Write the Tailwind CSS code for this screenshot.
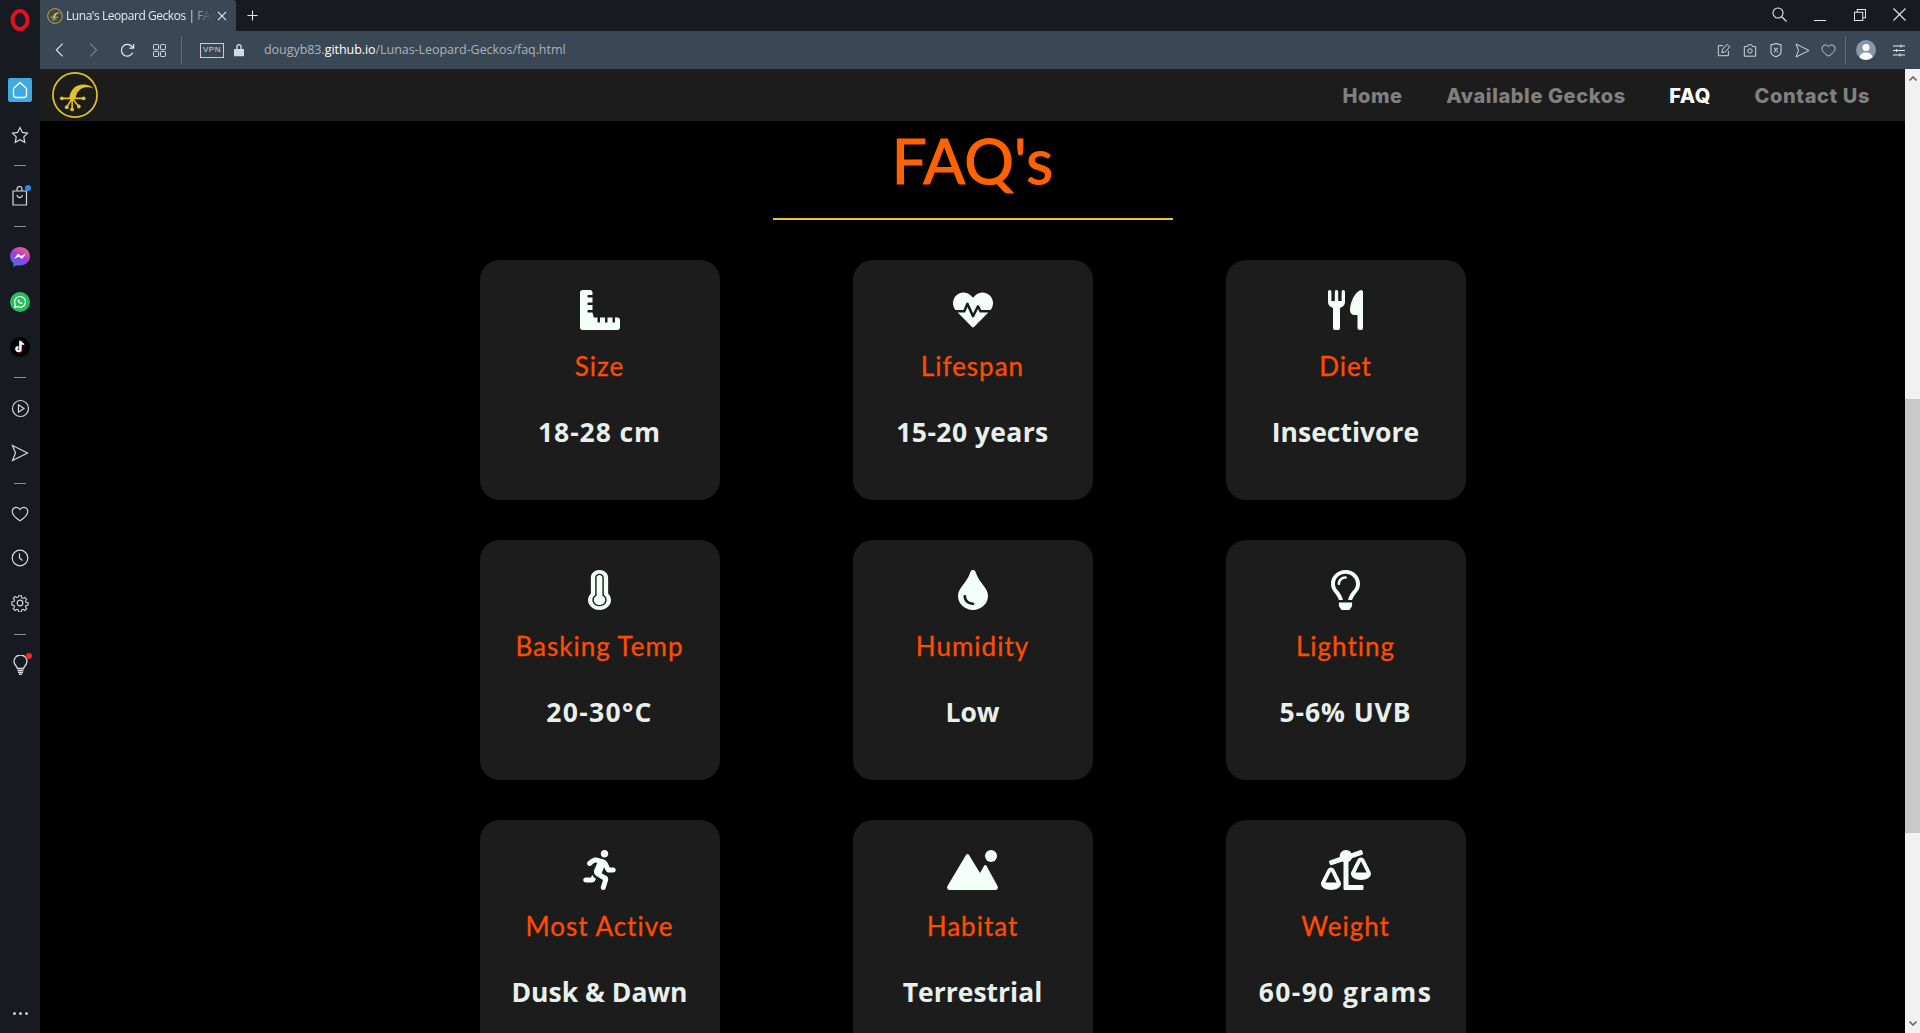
<!DOCTYPE html>
<html lang="en">
<head>
<meta charset="utf-8">
<title>Luna's Leopard Geckos | FAQ</title>
<script src="https://cdn.jsdelivr.net/npm/@tailwindcss/browser@4"></script>
</head>
<body class="bg-black">
<div class="flex h-[1033px] w-[1920px] overflow-hidden font-['Open_Sans',sans-serif]">

  <!-- Opera sidebar -->
  <aside class="flex h-full w-[40px] shrink-0 flex-col items-center bg-[#171b21] text-[#d5d9dd]">
    <div class="flex h-[40px] items-center justify-center">
      <svg class="h-[22px] w-[20px]" viewBox="0 0 20 22"><ellipse cx="10" cy="11" rx="7.5" ry="9" fill="none" stroke="#e0121d" stroke-width="4"/></svg>
    </div>
    <div class="mt-[38px] flex h-[24px] w-[24px] items-center justify-center rounded-[2px] bg-[#3fa9e0]">
      <svg class="h-[18px] w-[18px]" viewBox="0 0 18 18" fill="none" stroke="#fff" stroke-width="1.3"><path d="M2.5 7.5 9 1.5l6.500 6v6.500a2.500 2.500 0 0 1-2.500 2.500H5a2.500 2.500 0 0 1-2.500-2.500z"/></svg>
    </div>
    <svg class="mt-[24px] h-[18px] w-[18px]" viewBox="0 0 18 18" fill="none" stroke="currentColor" stroke-width="1.200"><path d="M9 1.500l2.400 4.900 5.100.8-3.700 3.700.9 5.400L9 13.800l-4.700 2.500.9-5.400L1.500 7.200l5.100-.8z"/></svg>
    <div class="mt-[21px] h-px w-[12px] bg-[#8a8f95]"></div>
    <div class="relative mt-[20px] h-[20px] w-[16px]">
      <svg class="h-[20px] w-[16px]" viewBox="0 0 16 20" fill="none" stroke="currentColor" stroke-width="1.200"><path d="M1 5h13.500v14H1zM5 5V3a2.500 2.500 0 0 1 5 0v2M5 9c.5 3.500 5 3.500 5.500 0"/></svg>
      <span class="absolute right-[-3px] top-[-1px] h-[6px] w-[6px] rounded-full bg-[#1e8ff0]"></span>
    </div>
    <div class="mt-[20px] h-px w-[12px] bg-[#8a8f95]"></div>
    <svg class="mt-[20px] h-[20px] w-[20px]" viewBox="0 0 20 20">
      <defs><linearGradient id="msg" x1="0.2" y1="1" x2="0.8" y2="0"><stop offset="0" stop-color="#2f7bf6"/><stop offset="0.5" stop-color="#a33bdc"/><stop offset="1" stop-color="#f8617d"/></linearGradient></defs>
      <path d="M10 0C4.500 0 0 4.100 0 9.300c0 2.800 1.300 5.200 3.400 6.900V20l3.400-1.800c1 .3 2.100.4 3.200.4 5.500 0 10-4.100 10-9.300S15.500 0 10 0z" fill="url(#msg)"/>
      <path d="M4 12l4-5.500 3 2.500 5-2.500-4 5.500-3-2.500z" fill="#fff"/>
    </svg>
    <svg class="mt-[25px] h-[20px] w-[20px]" viewBox="0 0 20 20">
      <circle cx="10" cy="10" r="10" fill="#25c05c"/>
      <path d="M10 4.500a5.400 5.400 0 0 0-4.600 8.200l-.7 2.600 2.700-.7A5.400 5.400 0 1 0 10 4.500z" fill="none" stroke="#fff" stroke-width="1.200"/>
      <path d="M8 7.500c-.7.700-.4 2 .8 3.300s2.500 1.600 3.300 1l.4-.9-1.200-.7-.6.500c-.7-.3-1.200-.9-1.500-1.500l.5-.6-.7-1.200z" fill="#fff"/>
    </svg>
    <svg class="mt-[25px] h-[20px] w-[20px]" viewBox="0 0 20 20">
      <circle cx="10" cy="10" r="10" fill="#000"/>
      <path d="M10.500 4v8.200a2 2 0 1 1-2-2M10.500 4c.2 1.900 1.300 3 3.200 3.200" fill="none" stroke="#ff2d55" stroke-width="1.800" transform="translate(.8 .5)"/>
      <path d="M10.500 4v8.200a2 2 0 1 1-2-2M10.500 4c.2 1.900 1.300 3 3.200 3.200" fill="none" stroke="#25f4ee" stroke-width="1.800" transform="translate(-.6 -.3)"/>
      <path d="M10.500 4v8.200a2 2 0 1 1-2-2M10.500 4c.2 1.900 1.300 3 3.200 3.200" fill="none" stroke="#fff" stroke-width="1.800"/>
    </svg>
    <div class="mt-[20px] h-px w-[12px] bg-[#8a8f95]"></div>
    <svg class="mt-[21px] h-[19px] w-[19px]" viewBox="0 0 19 19" fill="none" stroke="currentColor" stroke-width="1.200"><circle cx="9.500" cy="9.500" r="8"/><path d="M7.500 5.800l5.500 3.700-5.500 3.700z"/></svg>
    <svg class="mt-[26px] h-[18px] w-[18px]" viewBox="0 0 18 18" fill="none" stroke="currentColor" stroke-width="1.200"><path d="M1.500 1.500 16.500 9 1.500 16.500 4.500 9z"/></svg>
    <div class="mt-[21px] h-px w-[12px] bg-[#8a8f95]"></div>
    <svg class="mt-[21px] h-[18px] w-[18px]" viewBox="0 0 18 18" fill="none" stroke="currentColor" stroke-width="1.200"><path d="M9 15.800C4 12.500 1.200 10 1.200 6.500 1.200 4 3.200 2.300 5.200 2.300c1.600 0 3 .8 3.800 2.200.8-1.400 2.200-2.200 3.800-2.200 2 0 4 1.700 4 4.200 0 3.500-2.800 6-7.800 9.300z"/></svg>
    <svg class="mt-[26px] h-[18px] w-[18px]" viewBox="0 0 18 18" fill="none" stroke="currentColor" stroke-width="1.200"><circle cx="9" cy="9" r="7.800"/><path d="M8.500 4.500V9l3 2.500"/></svg>
    <svg class="mt-[27px] h-[18px] w-[18px]" viewBox="0 0 18 18" fill="none" stroke="currentColor" stroke-width="1.200"><circle cx="9" cy="9" r="2.800"/><path d="M7.500 1h3l.4 2.300 1.500.7 2-1.300 2 2.100-1.300 2 .6 1.500 2.300.4v2.600l-2.300.4-.6 1.500 1.300 2-2 2.100-2-1.300-1.500.7-.4 2.300h-3l-.4-2.300-1.500-.7-2 1.300-2-2.100 1.300-2-.6-1.500-2.300-.4V7.700l2.300-.4.6-1.500-1.300-2 2-2.100 2 1.300 1.500-.7z" transform="translate(.9 .9) scale(.9)"/></svg>
    <div class="mt-[22px] h-px w-[12px] bg-[#8a8f95]"></div>
    <div class="relative mt-[20px] h-[20px] w-[15px]">
      <svg class="h-[20px] w-[15px]" viewBox="0 0 15 20" fill="none" stroke="currentColor" stroke-width="1.300"><path d="M4.500 13.500C4 11 1 9.800 1 6.500a6.500 6.500 0 0 1 13 0c0 3.300-3 4.500-3.500 7zM4.500 15.500h6M5 17.500h5M6 19.300h3"/></svg>
      <span class="absolute right-[-4px] top-[-2px] h-[6px] w-[6px] rounded-full bg-[#f02a2a]"></span>
    </div>
    <div class="mt-auto mb-[18px] flex gap-[3px]">
      <span class="h-[3px] w-[3px] rounded-full bg-[#c9ccd0]"></span>
      <span class="h-[3px] w-[3px] rounded-full bg-[#c9ccd0]"></span>
      <span class="h-[3px] w-[3px] rounded-full bg-[#c9ccd0]"></span>
    </div>
  </aside>

  <div class="flex min-w-0 flex-1 flex-col">
    <!-- Tab strip -->
    <div class="flex h-[31px] shrink-0 items-center bg-[#171b21] text-[#e6e9ec]">
      <div class="flex h-full w-[196px] items-center rounded-tr-[3px] bg-[#3a4754] pl-[7px]">
        <svg class="h-[16px] w-[16px] shrink-0" viewBox="0 0 48 48" fill="none" stroke="#e0c324">
          <circle cx="24" cy="24" r="22" stroke-width="2.500"/>
          <path d="M18 28c.5-7 4-13 11-14.500 5-1 11 0 14.500 4-4-2-9-2-12-.5-4 2-6 5-7 11z" fill="#e0c324" stroke="none"/>
          <path d="M10 27.500h23M21 27.500l-5 9M21 27.500V39M21 27.500l7 8.500" stroke-width="2.500"/>
        </svg>
        <span class="ml-[3px] w-[145px] whitespace-nowrap font-['Open_Sans'] text-[12px] tracking-[-0.45px] [mask-image:linear-gradient(to_right,#000_85%,transparent)]">Luna's Leopard Geckos | FA</span>
        <svg class="ml-[6px] h-[10px] w-[10px]" viewBox="0 0 11 11" stroke="currentColor" stroke-width="1.200"><path d="M1 1l9 9M10 1l-9 9"/></svg>
      </div>
      <svg class="ml-[11px] h-[11px] w-[11px]" viewBox="0 0 12 12" stroke="currentColor" stroke-width="1.200"><path d="M6 .5v11M.5 6h11"/></svg>
      <svg class="ml-auto mb-[3px] h-[15px] w-[15px]" viewBox="0 0 15 15" fill="none" stroke="currentColor" stroke-width="1.100"><circle cx="6" cy="6" r="5"/><path d="M9.500 9.500l5 5"/></svg>
      <div class="ml-[27px] mt-[9px] h-px w-[12px] bg-[#e6e9ec]"></div>
      <svg class="ml-[28px] mb-[2px] h-[12px] w-[12px]" viewBox="0 0 13 13" fill="none" stroke="currentColor" stroke-width="1.100"><path d="M.5 3.500h9v9h-9zM3.500 3.500v-3h9v9h-3"/></svg>
      <svg class="ml-[27px] mr-[14px] mb-[2px] h-[13px] w-[13px]" viewBox="0 0 13 13" stroke="currentColor" stroke-width="1.100"><path d="M.5.500l12 12M12.500.500l-12 12"/></svg>
    </div>

    <!-- Toolbar -->
    <div class="flex h-[38px] shrink-0 items-center bg-[#3a4754] text-[#d5d9dd]">
      <svg class="ml-[15px] h-[16px] w-[9px]" viewBox="0 0 10 16" fill="none" stroke="#e6e9ec" stroke-width="1.200"><path d="M8.500 1 1.500 8l7 7"/></svg>
      <svg class="ml-[25px] h-[16px] w-[9px]" viewBox="0 0 10 16" fill="none" stroke="#7a8490" stroke-width="1.200"><path d="M1.500 1l7 7-7 7"/></svg>
      <svg class="ml-[22px] h-[15px] w-[15px]" viewBox="0 0 16 16" fill="none" stroke="#e6e9ec" stroke-width="1.300"><path d="M13.500 10.500A6.300 6.300 0 1 1 12.500 3.500L14.500 5.500M14.500 1v4.500H10"/></svg>
      <svg class="ml-[18px] h-[13px] w-[13px]" viewBox="0 0 14 14" fill="none" stroke="#e6e9ec" stroke-width="1"><rect x=".5" y=".5" width="5.500" height="5.500" rx="1"/><rect x="8" y=".5" width="5.500" height="5.500" rx="1"/><rect x=".5" y="8" width="5.500" height="5.500" rx="1"/><rect x="8" y="8" width="5.500" height="5.500" rx="1"/></svg>
      <div class="ml-[15px] h-[28px] w-px bg-[#5d6975]"></div>
      <div class="ml-[18px] flex h-[15px] w-[24px] items-center justify-center border border-[#c8cdd2] font-['Liberation_Sans'] text-[8px] leading-none tracking-[0.6px] text-[#d5d9dd]">VPN</div>
      <svg class="ml-[10px] h-[14px] w-[10px]" viewBox="0 0 11 14" fill="#d5d9dd"><path d="M0 6h11v8H0zM2.500 6V3.500a3 3 0 0 1 6 0V6H7V3.500a1.500 1.500 0 0 0-3 0V6z"/></svg>
      <div class="ml-[20px] whitespace-nowrap font-['Open_Sans'] text-[12.500px] tracking-[-0.05px] text-[#aab3bb]">dougyb83.<span class="text-white">github.io</span>/Lunas-Leopard-Geckos/faq.html</div>
      <div class="ml-auto flex items-center">
        <svg class="h-[14px] w-[14px]" viewBox="0 0 16 16" fill="none" stroke="currentColor" stroke-width="1.100"><path d="M7 3H1.500v11.500H13V9M5.500 11l1-4 5-5.500 3 3-5 5.500z"/></svg>
        <svg class="ml-[12px] h-[15px] w-[14px]" viewBox="0 0 16 16" fill="none" stroke="currentColor" stroke-width="1.100"><path d="M1.500 3.500h3.500l1-2h4l1 2h3.500v11h-13z"/><circle cx="8" cy="8.500" r="2.500"/></svg>
        <svg class="ml-[13px] h-[16px] w-[12px]" viewBox="0 0 13 16" fill="none" stroke="currentColor" stroke-width="1.100"><path d="M6.500 1 12 2.500v7c0 3-3 5-5.500 5.800C4 14.500 1 12.500 1 9.500v-7zM4.500 5.500l4 5M8.500 5.500l-4 5"/></svg>
        <svg class="ml-[13px] h-[15px] w-[15px]" viewBox="0 0 15 15" fill="none" stroke="currentColor" stroke-width="1"><path d="M1 1l13 6.500L1 14l2.500-6.500z"/></svg>
        <svg class="ml-[11px] h-[15px] w-[15px]" viewBox="0 0 18 18" fill="none" stroke="currentColor" stroke-width="1.100"><path d="M9 15.800C4 12.500 1.200 10 1.200 6.500 1.200 4 3.200 2.300 5.200 2.300c1.600 0 3 .8 3.800 2.200.8-1.400 2.200-2.200 3.800-2.200 2 0 4 1.700 4 4.200 0 3.500-2.800 6-7.800 9.300z"/></svg>
        <div class="ml-[9px] h-[28px] w-px bg-[#5d6975]"></div>
        <svg class="ml-[10px] h-[20px] w-[20px]" viewBox="0 0 20 20"><circle cx="10" cy="10" r="10" fill="#8a97a5"/><circle cx="10" cy="7.500" r="3.500" fill="#fff"/><path d="M3.500 17.500c.5-3.500 3-5 6.500-5s6 1.500 6.500 5a10 10 0 0 1-13 0z" fill="#fff"/></svg>
        <svg class="ml-[17px] mr-[15px] h-[13px] w-[12px]" viewBox="0 0 12 13" stroke="#e6e9ec" stroke-width="1" fill="none"><path d="M0 2h12M0 6.500h12M0 11h12M8 .5v3M3.500 5v3M7 9.500v3"/></svg>
      </div>
    </div>

    <div class="flex min-h-0 flex-1">
      <main class="flex min-w-0 flex-1 flex-col overflow-hidden bg-black">
        <nav class="flex h-[52px] shrink-0 items-center justify-between bg-[#1c1c1c] pl-[12px] pr-[35px]">
          <svg class="h-[46px] w-[46px]" viewBox="0 0 48 48" fill="none" stroke="#e0c324">
            <circle cx="24" cy="24" r="23" stroke-width="1.800"/>
            <path d="M18 28c.5-7 4-13 11-14.500 5-1 11 0 14.500 4-4-2-9-2-12-.5-4 2-6 5-7 11z" fill="#e0c324" stroke="none"/>
            <path d="M10.300 27.500H33M21 27.500l-5.600 9.200M21 27.500V39M21 27.500l7 8.500" stroke-width="1.700"/>
            <circle cx="10.300" cy="27.500" r="2" fill="#e0c324" stroke="none"/>
            <circle cx="33" cy="27.500" r="2" fill="#e0c324" stroke="none"/>
            <circle cx="15.400" cy="36.700" r="2" fill="#e0c324" stroke="none"/>
            <circle cx="21" cy="39" r="2" fill="#e0c324" stroke="none"/>
            <circle cx="28" cy="36" r="2" fill="#e0c324" stroke="none"/>
          </svg>
          <ul class="flex items-center gap-[43.5px] pt-[2px] font-['Inter'] text-[20px] font-extrabold tracking-[0.6px] text-[#808080]">
            <li>Home</li>
            <li>Available Geckos</li>
            <li class="text-white">FAQ</li>
            <li>Contact Us</li>
          </ul>
        </nav>

        <section class="flex flex-col items-center">
          <h1 class="font-['Lato'] text-[62px] leading-[78px] tracking-[0.1px] text-[#ff6200] [-webkit-text-stroke:1.2px_#ff6200]">FAQ's</h1>
          <div class="mt-[19px] h-[2px] w-[400px] bg-[#e6c92a]"></div>

          <div class="mt-[40px] grid grid-cols-[240px_240px_240px] gap-x-[133px] gap-y-[40px]">
            <article class="flex h-[240px] flex-col items-center rounded-[20px] bg-[#1c1c1c] pt-[30px]">
              <svg class="h-[40px] w-[40px]" viewBox="0 0 512 512" fill="#f5fffa"><path d="M160 288h-56c-4.420 0-8-3.580-8-8v-16c0-4.420 3.580-8 8-8h56v-64h-56c-4.420 0-8-3.580-8-8v-16c0-4.420 3.580-8 8-8h56V96h-56c-4.420 0-8-3.580-8-8V72c0-4.420 3.580-8 8-8h56V32c0-17.670-14.330-32-32-32H32C14.330 0 0 14.330 0 32v448c0 17.670 14.330 32 32 32h448c17.670 0 32-14.330 32-32v-96c0-17.670-14.330-32-32-32h-32v56c0 4.420-3.580 8-8 8h-16c-4.420 0-8-3.580-8-8v-56h-64v56c0 4.420-3.580 8-8 8h-16c-4.420 0-8-3.580-8-8v-56h-64v56c0 4.420-3.580 8-8 8h-16c-4.420 0-8-3.580-8-8v-56h-48z"/></svg>
              <h2 class="mt-[18px] font-['Lato'] text-[26px] leading-[36px] tracking-[1px] text-[#ff4d00] [-webkit-text-stroke:0.3px_#ff4d00]">Size</h2>
              <p class="mt-[30px] font-['Open_Sans'] text-[26.500px] font-bold leading-[36px] tracking-[0.9px] text-[#e8f0ec]">18-28 cm</p>
            </article>
            <article class="flex h-[240px] flex-col items-center rounded-[20px] bg-[#1c1c1c] pt-[30px]">
              <svg class="h-[40px] w-[40px]" viewBox="0 0 512 512" fill="#f5fffa"><path d="M320.200 243.800l-49.700 99.400c-6 12.100-23.400 11.700-28.900-.6l-56.900-126.300-30 71.700H60.600l182.500 186.500c7.100 7.300 18.600 7.300 25.700 0L451.400 288H342.300l-22.100-44.200zM473.700 73.900l-2.400-2.500c-51.500-52.600-135.800-52.600-187.400 0L256 100l-27.900-28.500c-51.500-52.700-135.900-52.700-187.400 0l-2.400 2.400C-10.400 123.700-12.500 203 31 256h102.400l35.900-86.200c5.400-12.900 23.600-13.200 29.400-.4l58.200 129.300 49-97.900c5.900-11.800 22.700-11.800 28.600 0l27.600 55.200H481c43.500-53 41.400-132.300-7.300-182.100z"/></svg>
              <h2 class="mt-[18px] font-['Lato'] text-[26px] leading-[36px] tracking-[1px] text-[#ff4d00] [-webkit-text-stroke:0.3px_#ff4d00]">Lifespan</h2>
              <p class="mt-[30px] font-['Open_Sans'] text-[26.500px] font-bold leading-[36px] tracking-[0.4px] text-[#e8f0ec]">15-20 years</p>
            </article>
            <article class="flex h-[240px] flex-col items-center rounded-[20px] bg-[#1c1c1c] pt-[30px]">
              <svg class="h-[40px] w-[35px]" viewBox="0 0 35 40" fill="#f5fffa"><path d="M0 1.700a1.700 1.700 0 0 1 3.400 0V11h3.400V1.700a1.700 1.700 0 0 1 3.400 0V11h3.400V1.700a1.700 1.700 0 0 1 3.400 0V12c0 3-2 5-5 6v20a2 2 0 0 1-2 2H7a2 2 0 0 1-2-2V18c-3-1-5-3-5-6z"/><path d="M35 2v36a2 2 0 0 1-2 2h-1a2.500 2.500 0 0 1-2.500-2.500V25h-3c-2.500 0-4.500-2-4.500-4.500C22 12 27 2 33 0c1 0 2 .8 2 2z"/></svg>
              <h2 class="mt-[18px] font-['Lato'] text-[26px] leading-[36px] tracking-[1px] text-[#ff4d00] [-webkit-text-stroke:0.3px_#ff4d00]">Diet</h2>
              <p class="mt-[30px] font-['Open_Sans'] text-[26.500px] font-bold leading-[36px] text-[#e8f0ec]">Insectivore</p>
            </article>

            <article class="flex h-[240px] flex-col items-center rounded-[20px] bg-[#1c1c1c] pt-[30px]">
              <svg class="h-[40px] w-[23px]" viewBox="0 0 256 512" preserveAspectRatio="none" fill="#f5fffa"><path d="M224 96c0-53.019-42.981-96-96-96S32 42.981 32 96v203.347C12.225 321.756.166 351.136.002 383.333c-.359 70.303 56.787 128.176 127.089 128.664.299.002.61.003.909.003 70.698 0 128-57.304 128-128 0-32.459-12.088-62.090-32-84.653V96zm-96 368l-.576-.002c-43.860-.304-79.647-36.544-79.423-80.420.173-33.980 19.266-51.652 31.999-66.080V96c0-26.467 21.533-48 48-48s48 21.533 48 48v221.498c12.630 14.312 32 32.164 32 66.502 0 44.112-35.888 80-80 80zm64-80c0 35.346-28.654 64-64 64s-64-28.654-64-64c0-23.685 12.876-44.349 32-55.417V96c0-17.673 14.327-32 32-32s32 14.327 32 32v232.583c19.124 11.068 32 31.732 32 55.417z"/></svg>
              <h2 class="mt-[18px] font-['Lato'] text-[26px] leading-[36px] tracking-[1px] text-[#ff4d00] [-webkit-text-stroke:0.3px_#ff4d00]">Basking Temp</h2>
              <p class="mt-[30px] font-['Open_Sans'] text-[26.500px] font-bold leading-[36px] tracking-[1.300px] text-[#e8f0ec]">20-30°C</p>
            </article>
            <article class="flex h-[240px] flex-col items-center rounded-[20px] bg-[#1c1c1c] pt-[30px]">
              <svg class="h-[40px] w-[30px]" viewBox="0 0 352 512" preserveAspectRatio="none" fill="#f5fffa"><path d="M205.220 22.090c-7.940-28.780-49.440-30.120-58.440 0C100.010 179.850 0 222.720 0 333.910 0 432.350 78.720 512 176 512s176-79.650 176-178.090c0-111.750-99.790-153.340-146.780-311.820zM176 448c-61.750 0-112-50.250-112-112 0-8.840 7.160-16 16-16s16 7.160 16 16c0 44.110 35.890 80 80 80 8.840 0 16 7.160 16 16s-7.160 16-16 16z"/></svg>
              <h2 class="mt-[18px] font-['Lato'] text-[26px] leading-[36px] tracking-[1px] text-[#ff4d00] [-webkit-text-stroke:0.3px_#ff4d00]">Humidity</h2>
              <p class="mt-[30px] font-['Open_Sans'] text-[26.500px] font-bold leading-[36px] text-[#e8f0ec]">Low</p>
            </article>
            <article class="flex h-[240px] flex-col items-center rounded-[20px] bg-[#1c1c1c] pt-[30px]">
              <svg class="h-[40px] w-[29px]" viewBox="0 0 352 512" preserveAspectRatio="none" fill="#f5fffa"><path d="M176 80c-52.940 0-96 43.060-96 96 0 8.840 7.160 16 16 16s16-7.160 16-16c0-35.300 28.720-64 64-64 8.840 0 16-7.160 16-16s-7.160-16-16-16zM96.060 459.170c0 3.150.93 6.220 2.680 8.840l24.510 36.840c2.970 4.460 7.970 7.140 13.320 7.140h78.850c5.360 0 10.360-2.680 13.320-7.140l24.510-36.840c1.740-2.620 2.670-5.700 2.680-8.840l.05-43.180H96.020l.04 43.180zM176 0C73.720 0 0 82.970 0 176c0 44.370 16.450 84.850 43.560 115.780 16.640 18.990 42.740 58.800 52.420 92.160v.06h48v-.12c-.01-4.770-.72-9.510-2.150-14.070-5.590-17.810-22.820-64.770-62.170-109.670-20.540-23.430-31.520-53.150-31.610-84.140-.2-73.640 59.670-128 127.950-128 70.580 0 128 57.420 128 128 0 30.970-11.240 60.850-31.650 84.140-39.110 44.610-56.420 91.470-62.100 109.460a47.507 47.507 0 0 0-2.220 14.300v.1h48v-.05c9.680-33.370 35.780-73.180 52.420-92.160C335.550 260.850 352 220.370 352 176 352 78.800 273.200 0 176 0z"/></svg>
              <h2 class="mt-[18px] font-['Lato'] text-[26px] leading-[36px] tracking-[1px] text-[#ff4d00] [-webkit-text-stroke:0.3px_#ff4d00]">Lighting</h2>
              <p class="mt-[30px] font-['Open_Sans'] text-[26.500px] font-bold leading-[36px] tracking-[0.9px] text-[#e8f0ec]">5-6% UVB</p>
            </article>

            <article class="flex h-[240px] flex-col items-center rounded-[20px] bg-[#1c1c1c] pt-[30px]">
              <svg class="h-[40px] w-[33px]" viewBox="0 0 416 512" fill="#f5fffa"><path d="M272 96c26.510 0 48-21.490 48-48S298.510 0 272 0s-48 21.490-48 48 21.490 48 48 48zM113.690 317.470l-14.800 34.520H32c-17.670 0-32 14.330-32 32s14.330 32 32 32h77.450c19.250 0 36.580-11.440 44.110-29.090l8.790-20.520-10.670-6.300c-17.320-10.230-30.060-25.370-37.990-42.610zM384 223.990h-44.030l-26.060-53.250c-12.500-25.550-35.450-44.230-61.780-50.940l-71.080-21.140c-28.300-6.800-57.770-.55-80.840 17.140l-39.670 30.410c-14.030 10.750-16.690 30.830-5.920 44.860s30.840 16.660 44.860 5.920l39.690-30.410c7.670-5.890 17.440-8 25.270-6.140l14.700 4.370-37.460 87.390c-12.620 29.480-1.310 64.010 26.300 80.310l84.980 50.170-27.470 87.730c-5.280 16.860 4.110 34.810 20.970 40.090 3.190 1 6.410 1.480 9.580 1.480 13.610 0 26.230-8.770 30.520-22.450l31.640-101.060c5.910-20.770-2.890-43.080-21.640-54.390l-61.240-36.140 31.310-78.280 20.270 41.430c8 16.340 24.920 26.890 43.110 26.890H384c17.670 0 32-14.330 32-32s-14.330-31.990-32-31.990z"/></svg>
              <h2 class="mt-[18px] font-['Lato'] text-[26px] leading-[36px] tracking-[1px] text-[#ff4d00] [-webkit-text-stroke:0.3px_#ff4d00]">Most Active</h2>
              <p class="mt-[30px] font-['Open_Sans'] text-[26.500px] font-bold leading-[36px] text-[#e8f0ec]">Dusk &amp; Dawn</p>
            </article>
            <article class="flex h-[240px] flex-col items-center rounded-[20px] bg-[#1c1c1c] pt-[30px]">
              <svg class="h-[40px] w-[51px]" viewBox="0 0 51 40" fill="#f5fffa"><circle cx="44" cy="6" r="6"/><path d="M19 5c1-1.500 2-1.500 3 0l11 18 4-7c.8-1.300 1.800-1.300 2.600 0L50.500 36c1 2 0 4-2 4H2.500c-2 0-3-2-2-4z"/></svg>
              <h2 class="mt-[18px] font-['Lato'] text-[26px] leading-[36px] tracking-[1px] text-[#ff4d00] [-webkit-text-stroke:0.3px_#ff4d00]">Habitat</h2>
              <p class="mt-[30px] font-['Open_Sans'] text-[26.500px] font-bold leading-[36px] text-[#e8f0ec]">Terrestrial</p>
            </article>
            <article class="flex h-[240px] flex-col items-center rounded-[20px] bg-[#1c1c1c] pt-[30px]">
              <svg class="h-[40px] w-[50px]" viewBox="0 0 640 512" fill="#f5fffa"><path d="M528 448H352V153.250c20.420-8.940 36.100-26.220 43.380-47.470l132-44.260c8.380-2.810 12.890-11.880 10.070-20.260l-10.170-30.340C524.470 2.540 515.400-1.970 507.020.85L389.110 40.410C375.300 16.360 349.690 0 320 0c-44.180 0-80 35.820-80 80 0 3.430.59 6.710 1.010 10.030l-128.390 43.050c-8.380 2.810-12.890 11.880-10.070 20.260l10.170 30.340c2.810 8.380 11.880 12.890 20.260 10.070l142.050-47.630c4.070 2.770 8.430 5.120 12.970 7.120V496c0 8.840 7.160 16 16 16h224c8.840 0 16-7.160 16-16v-32c0-8.840-7.160-16-16-16zm111.980-144c0-16.180 1.340-8.730-85.050-181.510-17.650-35.290-68.190-35.360-85.870 0-87.120 174.260-85.040 165.840-85.040 181.510H384c0 44.180 57.310 80 128 80s128-35.820 128-80h-.02zM440 288l72-144 72 144H440zm-269.070-37.510c-17.650-35.290-68.190-35.360-85.870 0C-2.060 424.750.02 416.330.02 432H0c0 44.180 57.310 80 128 80s128-35.820 128-80h-.02c0-16.180 1.340-8.730-85.050-181.510zM56 416l72-144 72 144H56z"/></svg>
              <h2 class="mt-[18px] font-['Lato'] text-[26px] leading-[36px] tracking-[1px] text-[#ff4d00] [-webkit-text-stroke:0.3px_#ff4d00]">Weight</h2>
              <p class="mt-[30px] font-['Open_Sans'] text-[26.500px] font-bold leading-[36px] tracking-[1.400px] text-[#e8f0ec]">60-90 grams</p>
            </article>
          </div>
        </section>
      </main>

      <!-- Page scrollbar -->
      <div class="flex w-[15px] shrink-0 flex-col items-center bg-[#f1f1f1] pt-[7px]">
        <svg class="h-[5px] w-[8px]" viewBox="0 0 8 5" fill="none" stroke="#6a6a6a" stroke-width="1.600"><path d="M.5 4.500 4 1l3.500 3.500"/></svg>
        <div class="mt-[318px] h-[434px] w-full bg-[#c9c9c9]"></div>
        <svg class="mt-auto mb-[7px] h-[5px] w-[8px]" viewBox="0 0 8 5" fill="none" stroke="#6a6a6a" stroke-width="1.600"><path d="M.5.500 4 4 7.500.500"/></svg>
      </div>
    </div>
  </div>
</div>
</body>
</html>
